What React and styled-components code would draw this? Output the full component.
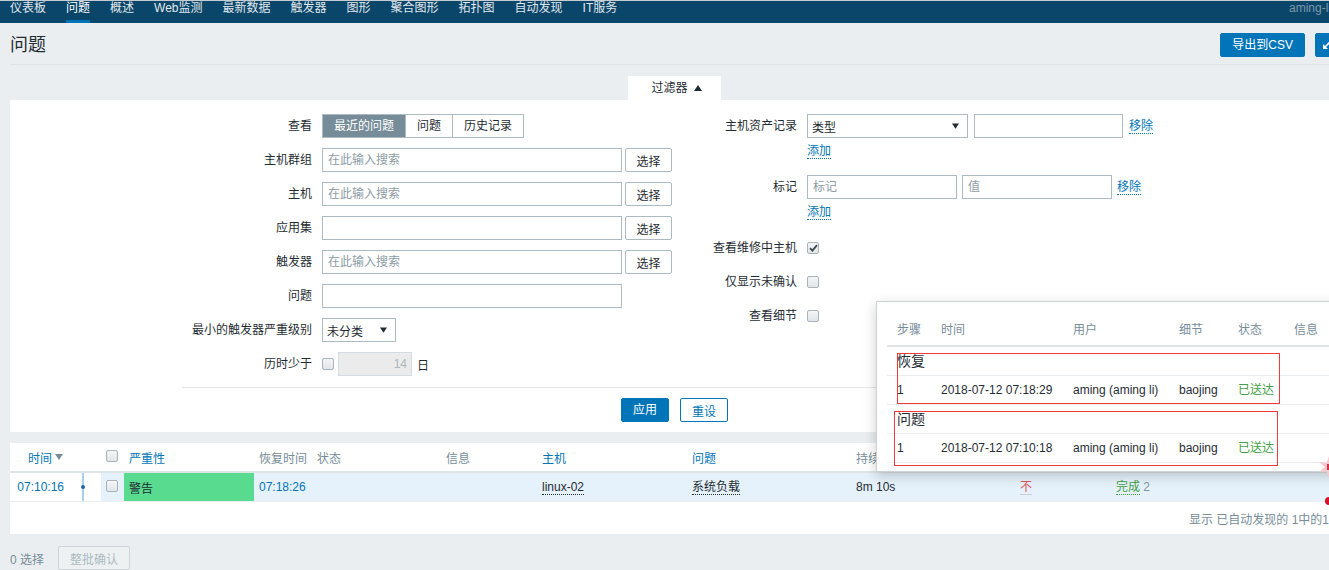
import React from 'react';
import styled, { createGlobalStyle } from 'styled-components';

const FONT = '"Liberation Sans", "Noto Sans CJK SC", sans-serif';
const BLUE = '#0275b8';
const GRAY = '#768d99';
const TEXT = '#1f2c33';
const BORDER = '#acbbc2';

const GlobalStyle = createGlobalStyle`
  html, body { margin: 0; padding: 0; }
  body { background: #ebeef0; font-family: ${FONT}; font-size: 12px; color: ${TEXT}; overflow: hidden; }
  * { box-sizing: border-box; }
  input { font-family: ${FONT}; }
`;

const Viewport = styled.div`
  width: 1329px;
  height: 570px;
  overflow: hidden;
`;

const Page = styled.div`
  position: relative;
  width: 1349px;
  height: 570px;
`;

/* ---------- top navigation ---------- */
const TopNav = styled.nav`
  display: flex;
  height: 23px;
  background: #0a466a;
  border-top: 1px solid #c6cdd2;
`;

const NavItem = styled.a`
  margin: 0 10px;
  height: 22px;
  line-height: 14px;
  font-size: 12px;
  white-space: nowrap;
  color: ${p => (p.$active ? '#ffffff' : '#e1e8ec')};
  border-bottom: 3px solid ${p => (p.$active ? BLUE : 'transparent')};
`;

const UserBox = styled.div`
  margin-left: auto;
  width: 60px;
  overflow: hidden;
  white-space: nowrap;
  line-height: 14px;
  color: #7f98a8;
`;

/* ---------- page header ---------- */
const PageHeader = styled.header`
  display: flex;
  align-items: center;
  height: 42px;
  padding-top: 3px;
  margin: 0 10px;
  border-bottom: 1px solid #dde3e6;
`;

const Title = styled.h1`
  flex: 1;
  margin: 0;
  font-size: 18px;
  font-weight: normal;
  line-height: 24px;
  color: ${TEXT};
`;

const HeaderButtons = styled.div`
  display: flex;
  gap: 10px;
`;

const PrimaryButton = styled.button`
  height: 24px;
  padding: 0 ${p => p.$pad ?? 11}px;
  border: 1px solid ${BLUE};
  border-radius: 2px;
  background: ${BLUE};
  color: #fff;
  font: 12px ${FONT};
  line-height: 22px;
  display: flex;
  align-items: center;
  justify-content: center;
`;

const IconButton = styled(PrimaryButton)`
  width: 24px;
  padding: 0;
`;

/* ---------- filter ---------- */
const FilterTabRow = styled.div`
  display: flex;
  justify-content: center;
  margin: 11px 10px 0;
`;

const FilterTab = styled.div`
  display: flex;
  align-items: center;
  gap: 6px;
  height: 24px;
  padding: 0 19px 0 23px;
  background: #fff;
  line-height: 24px;
`;

const FilterPanel = styled.section`
  margin: 0 10px;
  background: #fff;
  padding: 14px 0 10px;
`;

const FilterBody = styled.div`
  display: flex;
`;

const Column = styled.div`
  width: ${p => (p.$w ? `${p.$w}px` : 'auto')};
  flex: ${p => (p.$w ? 'none' : '1')};
`;

const FormGrid = styled.div`
  display: grid;
  grid-template-columns: ${p => p.$label}px 1fr;
  column-gap: 10px;
  row-gap: 10px;
  align-items: start;
`;

const Label = styled.div`
  line-height: 24px;
  text-align: right;
  white-space: nowrap;
`;

const Field = styled.div`
  display: flex;
  align-items: center;
  gap: ${p => p.$gap ?? 3}px;
  height: 24px;
`;

const Stack = styled.div`
  display: flex;
  flex-direction: column;
`;

const AddRow = styled.div`
  height: 27px;
  display: flex;
  align-items: center;
`;

const Input = styled.input`
  width: ${p => p.$w}px;
  height: 24px;
  border: 1px solid ${BORDER};
  padding: 0 5px;
  font-size: 12px;
  color: ${TEXT};
  background: #fff;
  outline: none;
  &::placeholder { color: #8d9ca5; }
  &:disabled {
    background: #ebebeb;
    border-color: #d5dbde;
    color: #aab7be;
    text-align: right;
    padding: 0 4px;
  }
`;

const SelectBtn = styled.button`
  width: 47px;
  height: 24px;
  border: 1px solid ${BORDER};
  border-radius: 2px;
  background: #fff;
  color: ${TEXT};
  font: 12px ${FONT};
  padding: 0;
`;

const SegGroup = styled.div`
  display: inline-flex;
  height: 24px;
  border: 1px solid ${BORDER};
`;

const Segment = styled.div`
  padding: 0 11px;
  line-height: 22px;
  background: ${p => (p.$on ? GRAY : '#fff')};
  color: ${p => (p.$on ? '#fff' : TEXT)};
  & + & { border-left: 1px solid ${BORDER}; }
`;

const FakeSelect = styled.div`
  width: ${p => p.$w}px;
  height: 24px;
  border: 1px solid ${BORDER};
  background: #fff;
  display: flex;
  align-items: center;
  justify-content: space-between;
  padding: 0 8px 0 4px;
`;

const Link = styled.a`
  color: ${BLUE};
  line-height: 14px;
  border-bottom: 1px dotted ${BLUE};
`;

const Box = styled.span`
  display: inline-flex;
  align-items: center;
  justify-content: center;
  width: 12px;
  height: 12px;
  border: 1px solid #a9b3b9;
  border-radius: 2px;
  background: linear-gradient(#f4f5f6, #e1e5e8);
  flex: none;
`;

const Unit = styled.span`
  margin-left: 1px;
`;

const FilterFooter = styled.div`
  margin: 11px 172px 0;
  border-top: 1px solid #e3e7ea;
  padding-top: 10px;
  display: flex;
  justify-content: center;
  gap: 11px;
`;

const GhostButton = styled.button`
  height: 24px;
  padding: 0 11px;
  border: 1px solid ${BLUE};
  border-radius: 2px;
  background: #fff;
  color: ${BLUE};
  font: 12px ${FONT};
`;

/* ---------- problems table ---------- */
const TablePanel = styled.section`
  margin: 11px 10px 0;
  background: #fff;
`;

const Table = styled.table`
  width: 1329px;
  border-collapse: collapse;
  table-layout: fixed;
`;

const Th = styled.th`
  height: 29px;
  padding: 0 ${p => p.$pr ?? 5}px 0 ${p => p.$pl ?? 5}px;
  text-align: ${p => p.$align || 'left'};
  font-weight: normal;
  white-space: nowrap;
  overflow: hidden;
  color: ${p => (p.$link ? BLUE : GRAY)};
  border-bottom: 2px solid #dfe4e7;
  vertical-align: middle;
`;

const Td = styled.td`
  height: 28px;
  padding: 0 ${p => p.$pr ?? 5}px 0 ${p => p.$pl ?? 5}px;
  text-align: ${p => p.$align || 'left'};
  white-space: nowrap;
  overflow: hidden;
  border-bottom: 1px solid #ebeef0;
  background: ${p => p.$bg || '#e6f2fb'};
  color: ${p => p.$color || TEXT};
  vertical-align: middle;
`;

const Timeline = styled.div`
  width: 2px;
  height: 28px;
  margin-left: 9px;
  background: #a8d0ea;
  display: flex;
  align-items: center;
  justify-content: center;
`;

const Dot = styled.span`
  width: 4px;
  height: 4px;
  border-radius: 50%;
  background: #1f65a6;
  flex: none;
`;

const Dotted = styled.span`
  color: ${p => p.$color || TEXT};
  border-bottom: 1px ${p => (p.$solid ? 'solid' : 'dotted')} ${p => p.$line || p.$color || TEXT};
  line-height: 14px;
`;

const Muted = styled.span`
  color: #7f98a8;
`;

const SortHead = styled.span`
  display: inline-flex;
  align-items: center;
  gap: 3px;
`;

const TableFooter = styled.div`
  height: 32px;
  display: flex;
  align-items: center;
  justify-content: flex-end;
  padding-right: 10px;
  color: ${GRAY};
  white-space: nowrap;
`;

const BottomBar = styled.div`
  display: flex;
  align-items: center;
  gap: 14px;
  margin: 12px 10px 0;
  color: ${GRAY};
`;

const DisabledButton = styled.button`
  height: 24px;
  padding: 0 11px;
  border: 1px solid #cdd5d9;
  border-radius: 2px;
  background: #eef1f2;
  color: #acbbc2;
  font: 12px ${FONT};
`;

/* ---------- action popup ---------- */
const Popup = styled.div`
  position: absolute;
  left: 876px;
  top: 301px;
  width: 480px;
  height: 171px;
  background: #fff;
  border: 1px solid #cbd3d8;
  box-shadow: 0 4px 12px rgba(0, 0, 0, 0.2);
  padding: 13px 0 0 10px;
`;

const PopTable = styled.table`
  width: 100%;
  border-collapse: separate;
  border-spacing: 0;
  table-layout: fixed;
`;

const PTh = styled.th`
  padding: 0 5px 0 ${p => p.$pl ?? 5}px;
  line-height: 30px;
  text-align: left;
  font-weight: normal;
  color: ${GRAY};
  border-bottom: 2px solid #dfe4e7;
  white-space: nowrap;
`;

const PTd = styled.td`
  padding: 0 5px 0 ${p => p.$pl ?? 5}px;
  line-height: 28px;
  border-bottom: 1px solid #ebeef0;
  white-space: nowrap;
  color: ${p => p.$color || TEXT};
  font-size: ${p => p.$size || 12}px;
`;

const Annotation = styled.div`
  position: absolute;
  left: ${p => p.$x}px;
  top: ${p => p.$y}px;
  width: ${p => p.$w}px;
  height: ${p => p.$h}px;
  border: 1px solid #f23a3a;
  pointer-events: none;
`;

const EdgeBadge = styled.svg`
  position: absolute;
  left: ${p => p.$x}px;
  top: ${p => p.$y}px;
`;

const Tri = ({ up, color = TEXT, w = 8, h = 6 }) => (
  <svg width={w} height={h} viewBox="0 0 8 6">
    <path d={up ? 'M0 6 L4 0 L8 6 Z' : 'M0 0 L8 0 L4 6 Z'} fill={color} />
  </svg>
);

const Checkbox = ({ checked }) => (
  <Box>
    {checked && (
      <svg width="9" height="8" viewBox="0 0 9 8">
        <path d="M1 4.2 L3.4 6.6 L8 1.2" stroke="#3b4a52" strokeWidth="1.8" fill="none" />
      </svg>
    )}
  </Box>
);

const navItems = ['仪表板', '问题', '概述', 'Web监测', '最新数据', '触发器', '图形', '聚合图形', '拓扑图', '自动发现', 'IT服务'];

const popRows = [
  { group: '恢复', time: '2018-07-12 07:18:29' },
  { group: '问题', time: '2018-07-12 07:10:18' },
];

const tableCols = [63, 28, 23, 130, 58, 129, 96, 150, 164, 164, 96, null];
const popCols = [49, 132, 106, 59, 56, null];

export default function App() {
  return (
    <Viewport>
      <GlobalStyle />
      <Page>
        <TopNav>
          {navItems.map(n => (
            <NavItem key={n} $active={n === '问题'}>{n}</NavItem>
          ))}
          <UserBox>aming-linux</UserBox>
        </TopNav>

        <PageHeader>
          <Title>问题</Title>
          <HeaderButtons>
            <PrimaryButton>导出到CSV</PrimaryButton>
            <IconButton aria-label="fullscreen">
              <svg width="10" height="10" viewBox="0 0 10 10">
                <path d="M9 1 L2.5 7.5" stroke="#fff" strokeWidth="1.6" />
                <path d="M1 4 L1 9 L6 9 Z" fill="#fff" />
              </svg>
            </IconButton>
          </HeaderButtons>
        </PageHeader>

        <FilterTabRow>
          <FilterTab>过滤器 <Tri up /></FilterTab>
        </FilterTabRow>

        <FilterPanel>
          <FilterBody>
            <Column $w={664}>
              <FormGrid $label={302}>
                <Label>查看</Label>
                <Field>
                  <SegGroup>
                    <Segment $on>最近的问题</Segment>
                    <Segment>问题</Segment>
                    <Segment>历史记录</Segment>
                  </SegGroup>
                </Field>

                <Label>主机群组</Label>
                <Field><Input $w={300} placeholder="在此输入搜索" /><SelectBtn>选择</SelectBtn></Field>

                <Label>主机</Label>
                <Field><Input $w={300} placeholder="在此输入搜索" /><SelectBtn>选择</SelectBtn></Field>

                <Label>应用集</Label>
                <Field><Input $w={300} /><SelectBtn>选择</SelectBtn></Field>

                <Label>触发器</Label>
                <Field><Input $w={300} placeholder="在此输入搜索" /><SelectBtn>选择</SelectBtn></Field>

                <Label>问题</Label>
                <Field><Input $w={300} /></Field>

                <Label>最小的触发器严重级别</Label>
                <Field>
                  <FakeSelect $w={74}>未分类<Tri w={7} h={6} /></FakeSelect>
                </Field>

                <Label>历时少于</Label>
                <Field $gap={4}>
                  <Checkbox />
                  <Input $w={74} disabled defaultValue="14" />
                  <Unit>日</Unit>
                </Field>
              </FormGrid>
            </Column>

            <Column>
              <FormGrid $label={123}>
                <Label>主机资产记录</Label>
                <Stack>
                  <Field $gap={6}>
                    <FakeSelect $w={161}>类型<Tri w={7} h={6} /></FakeSelect>
                    <Input $w={149} />
                    <Link>移除</Link>
                  </Field>
                  <AddRow><Link>添加</Link></AddRow>
                </Stack>

                <Label>标记</Label>
                <Stack>
                  <Field $gap={5}>
                    <Input $w={150} placeholder="标记" />
                    <Input $w={150} placeholder="值" />
                    <Link>移除</Link>
                  </Field>
                  <AddRow><Link>添加</Link></AddRow>
                </Stack>

                <Label>查看维修中主机</Label>
                <Field><Checkbox checked /></Field>

                <Label>仅显示未确认</Label>
                <Field><Checkbox /></Field>

                <Label>查看细节</Label>
                <Field><Checkbox /></Field>
              </FormGrid>
            </Column>
          </FilterBody>

          <FilterFooter>
            <PrimaryButton>应用</PrimaryButton>
            <GhostButton>重设</GhostButton>
          </FilterFooter>
        </FilterPanel>

        <TablePanel>
          <Table>
            <colgroup>
              {tableCols.map((w, i) => (
                <col key={i} width={w || undefined} />
              ))}
            </colgroup>
            <thead>
              <tr>
                <Th $link $align="right" $pr={10}>
                  <SortHead>时间 <Tri w={8} h={6} color={GRAY} /></SortHead>
                </Th>
                <Th />
                <Th><Checkbox /></Th>
                <Th $link>严重性</Th>
                <Th>恢复时间</Th>
                <Th>状态</Th>
                <Th>信息</Th>
                <Th $link>主机</Th>
                <Th $link>问题</Th>
                <Th>持续</Th>
                <Th />
                <Th />
              </tr>
            </thead>
            <tbody>
              <tr>
                <Td $bg="#fff" $align="right" $pr={9} $color={BLUE}>07:10:16</Td>
                <Td $bg="#fff" $pl={0} $pr={0}><Timeline><Dot /></Timeline></Td>
                <Td><Checkbox /></Td>
                <Td $bg="#59db8f">警告</Td>
                <Td $color={BLUE}>07:18:26</Td>
                <Td />
                <Td />
                <Td><Dotted>linux-02</Dotted></Td>
                <Td><Dotted>系统负载</Dotted></Td>
                <Td>8m 10s</Td>
                <Td><Dotted $color="#e45959" $line="#c9d1d6" $solid>不</Dotted></Td>
                <Td><Dotted $color="#429e47">完成</Dotted> <Muted>2</Muted></Td>
              </tr>
            </tbody>
          </Table>
          <TableFooter>显示 已自动发现的 1中的1</TableFooter>
        </TablePanel>

        <BottomBar>
          <span>0 选择</span>
          <DisabledButton>整批确认</DisabledButton>
        </BottomBar>

        <Popup>
          <PopTable>
            <colgroup>
              {popCols.map((w, i) => (
                <col key={i} width={w || undefined} />
              ))}
            </colgroup>
            <thead>
              <tr>
                <PTh $pl={10}>步骤</PTh>
                <PTh>时间</PTh>
                <PTh>用户</PTh>
                <PTh>细节</PTh>
                <PTh>状态</PTh>
                <PTh>信息</PTh>
              </tr>
            </thead>
            <tbody>
              {popRows.map(r => (
                <React.Fragment key={r.group}>
                  <tr>
                    <PTd $pl={10} $size={14} colSpan={6}>{r.group}</PTd>
                  </tr>
                  <tr>
                    <PTd $pl={10}>1</PTd>
                    <PTd>{r.time}</PTd>
                    <PTd>aming (aming li)</PTd>
                    <PTd>baojing</PTd>
                    <PTd $color="#3f9f45">已送达</PTd>
                    <PTd />
                  </tr>
                </React.Fragment>
              ))}
            </tbody>
          </PopTable>
          <Annotation $x={20} $y={51} $w={383} $h={51} />
          <Annotation $x={17} $y={109} $w={384} $h={55} />
        </Popup>

        <EdgeBadge $x={1318} $y={456} width="22" height="22" viewBox="0 0 22 22">
          <path d="M11 0 L13.5 7 L21 6 L15.5 11 L21 16 L13.5 15 L11 22 L8.5 15 L1 16 L6.5 11 L1 6 L8.5 7 Z" fill="#f6c9cf" />
          <path d="M9 8 L14 8 L14 14 L9 14 Z" fill="#d9334a" />
        </EdgeBadge>
        <EdgeBadge $x={1324} $y={496} width="10" height="10" viewBox="0 0 10 10">
          <circle cx="5" cy="5" r="4" fill="#d4102a" />
        </EdgeBadge>
      </Page>
    </Viewport>
  );
}
